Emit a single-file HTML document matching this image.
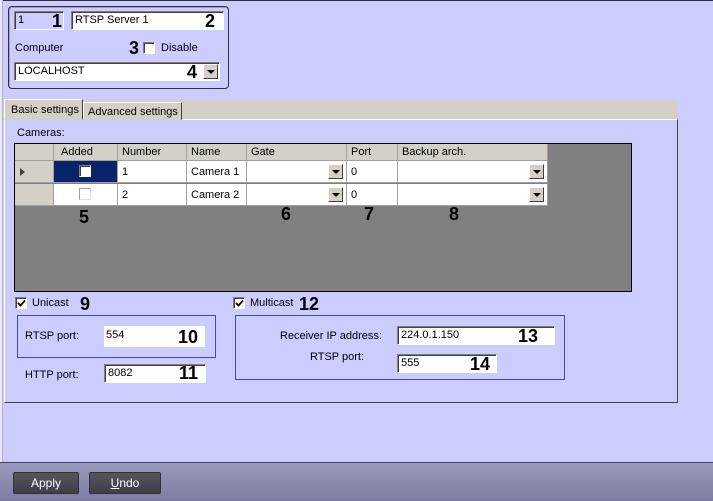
<!DOCTYPE html>
<html><head><meta charset="utf-8"><style>
*{margin:0;padding:0;box-sizing:border-box}
body{width:713px;height:501px;overflow:hidden;background:#ccccfe;font-family:"Liberation Sans",sans-serif;font-size:11px;color:#000;position:relative}
.a{position:absolute;white-space:nowrap}
.inp{position:absolute;background:#fff;border:1px solid;border-color:#808080 #fff #fff #808080;box-shadow:inset 1px 1px 0 #404040;padding:2px 3px;font-size:11px;white-space:nowrap}
.n{position:absolute;font-weight:bold;font-size:18px;line-height:18px}
.dd{position:absolute;width:15px;height:15px;background:#d4d0c8;border:1px solid;border-color:#fff #404040 #404040 #fff}
.dd:after{content:"";position:absolute;left:3px;top:5px;border-left:4px solid transparent;border-right:4px solid transparent;border-top:4px solid #000}
.cb{position:absolute;width:12px;height:12px;background:#fff;border:1px solid;border-color:#808080 #fff #fff #808080;box-shadow:inset 1px 1px 0 #404040}
.cb svg{position:absolute;left:1px;top:1px}
.grp{position:absolute;border:1px solid #4848a8}
.c{position:absolute;top:0;height:100%;border-right:1px solid #a0a0a0;padding:2px 4px;white-space:nowrap}
.row{position:absolute;left:0;width:533px;height:22px;background:#fff;border-bottom:1px solid #a0a0a0}
.hd{background:#d4d0c8;height:17px;border-bottom:1px solid #a0a0a0}
.btn{position:absolute;top:472px;height:22px;background:linear-gradient(#555560,#3e3e48);border:1px solid #303038;border-radius:2px;color:#fff;text-align:center;line-height:20px;font-size:12px}
</style></head><body>
<div class="a" style="left:0;top:0;width:713px;height:1px;background:#303040"></div>
<div class="a" style="left:0;top:0;width:3px;height:463px;background:#e8e8f8;border-right:1px solid #b0b0c8"></div>

<div class="a" style="left:8px;top:6px;width:221px;height:83px;border:1px solid #303040;border-radius:4px;box-shadow:inset 1px 1px 0 #a0a0c8"></div>
<div class="inp" style="left:14px;top:11px;width:50px;height:19px;background:#ccccfe">1</div>
<div class="n" style="left:52px;top:12px">1</div>
<div class="inp" style="left:71px;top:11px;width:153px;height:19px">RTSP Server 1</div>
<div class="n" style="left:205px;top:12px">2</div>
<div class="a" style="left:15px;top:42px">Computer</div>
<div class="n" style="left:129px;top:39px">3</div>
<div class="cb" style="left:143px;top:42px"></div>
<div class="a" style="left:161px;top:42px">Disable</div>
<div class="inp" style="left:14px;top:62px;width:206px;height:19px">LOCALHOST</div>
<div class="n" style="left:187px;top:63px">4</div>
<div class="dd" style="left:203px;top:64px"></div>

<div class="a" style="left:3px;top:100px;width:675px;height:20px;background:#d4d0c8"></div>
<div class="a" style="left:4px;top:119px;width:674px;height:284px;border:1px solid;border-color:#fff #404040 #404040 #fff;background:#ccccfe"></div>
<div class="a" style="left:4px;top:99px;width:79px;height:21px;background:#d4d0c8;border:1px solid;border-color:#fff #404040 transparent #fff;padding:4px 0 0 6px;font-size:11px">Basic settings</div>
<div class="a" style="left:83px;top:102px;width:99px;height:18px;background:#d4d0c8;border:1px solid;border-color:#fff #404040 transparent #fff;padding:3px 0 0 4px;font-size:11px">Advanced settings</div>

<div class="a" style="left:17px;top:127px">Cameras:</div>
<div class="a" style="left:14px;top:143px;width:618px;height:149px;background:#808080;border:1px solid #000">
 <div class="row hd" style="top:0">
  <div class="c" style="left:0;width:39px"></div>
  <div class="c" style="left:39px;width:64px;padding-left:7px">Added</div>
  <div class="c" style="left:103px;width:69px">Number</div>
  <div class="c" style="left:172px;width:60px">Name</div>
  <div class="c" style="left:232px;width:100px">Gate</div>
  <div class="c" style="left:332px;width:51px">Port</div>
  <div class="c" style="left:383px;width:150px">Backup arch.</div>
 </div>
 <div class="row" style="top:17px">
  <div class="c" style="left:0;width:39px;background:#d4d0c8"><span style="position:absolute;left:5px;top:7px;border-top:4px solid transparent;border-bottom:4px solid transparent;border-left:5px solid #404040"></span></div>
  <div class="c" style="left:39px;width:64px;background:#0a246a"><div class="cb" style="left:25px;top:4px"></div></div>
  <div class="c" style="left:103px;width:69px;padding-top:5px">1</div>
  <div class="c" style="left:172px;width:60px;padding-top:5px">Camera 1</div>
  <div class="c" style="left:232px;width:100px"><div class="dd" style="left:81px;top:3px"></div></div>
  <div class="c" style="left:332px;width:51px;padding-top:5px">0</div>
  <div class="c" style="left:383px;width:150px"><div class="dd" style="left:131px;top:3px"></div></div>
 </div>
 <div class="row" style="top:40px">
  <div class="c" style="left:0;width:39px;background:#d4d0c8"></div>
  <div class="c" style="left:39px;width:64px"><div class="cb" style="left:25px;top:4px;box-shadow:none;border-color:#a0a0a0 #e0e0e0 #e0e0e0 #a0a0a0"></div></div>
  <div class="c" style="left:103px;width:69px;padding-top:5px">2</div>
  <div class="c" style="left:172px;width:60px;padding-top:5px">Camera 2</div>
  <div class="c" style="left:232px;width:100px"><div class="dd" style="left:81px;top:3px"></div></div>
  <div class="c" style="left:332px;width:51px;padding-top:5px">0</div>
  <div class="c" style="left:383px;width:150px"><div class="dd" style="left:131px;top:3px"></div></div>
 </div>
</div>
<div class="n" style="left:79px;top:208px">5</div>
<div class="n" style="left:281px;top:205px">6</div>
<div class="n" style="left:364px;top:205px">7</div>
<div class="n" style="left:449px;top:205px">8</div>

<div class="cb" style="left:15px;top:297px"><svg width="9" height="9" viewBox="0 0 9 9"><path d="M1 4 L3.5 6.5 L8 1.5" stroke="#000" stroke-width="1.8" fill="none"/></svg></div>
<div class="a" style="left:32px;top:297px">Unicast</div>
<div class="n" style="left:80px;top:295px">9</div>
<div class="grp" style="left:17px;top:315px;width:199px;height:43px"></div>
<div class="a" style="left:25px;top:330px">RTSP port:</div>
<div class="a" style="left:104px;top:326px;width:101px;height:21px;background:#fff;padding:3px 2px">554</div>
<div class="n" style="left:178px;top:328px">10</div>
<div class="a" style="left:25px;top:369px">HTTP port:</div>
<div class="inp" style="left:104px;top:364px;width:102px;height:19px">8082</div>
<div class="n" style="left:179px;top:364px">11</div>

<div class="cb" style="left:233px;top:297px"><svg width="9" height="9" viewBox="0 0 9 9"><path d="M1 4 L3.5 6.5 L8 1.5" stroke="#000" stroke-width="1.8" fill="none"/></svg></div>
<div class="a" style="left:250px;top:297px">Multicast</div>
<div class="n" style="left:299px;top:295px">12</div>
<div class="grp" style="left:235px;top:315px;width:330px;height:65px"></div>
<div class="a" style="left:280px;top:330px">Receiver IP address:</div>
<div class="inp" style="left:397px;top:326px;width:158px;height:19px">224.0.1.150</div>
<div class="n" style="left:518px;top:327px">13</div>
<div class="a" style="left:310px;top:351px">RTSP port:</div>
<div class="inp" style="left:397px;top:354px;width:100px;height:19px">555</div>
<div class="n" style="left:470px;top:355px">14</div>

<div class="a" style="left:0;top:462px;width:713px;height:39px;background:linear-gradient(#9a9abc,#7c7ca2);border-top:1px solid #404060"></div>
<div class="btn" style="left:13px;width:66px">Apply</div>
<div class="btn" style="left:89px;width:72px"><u>U</u>ndo</div>
</body></html>
